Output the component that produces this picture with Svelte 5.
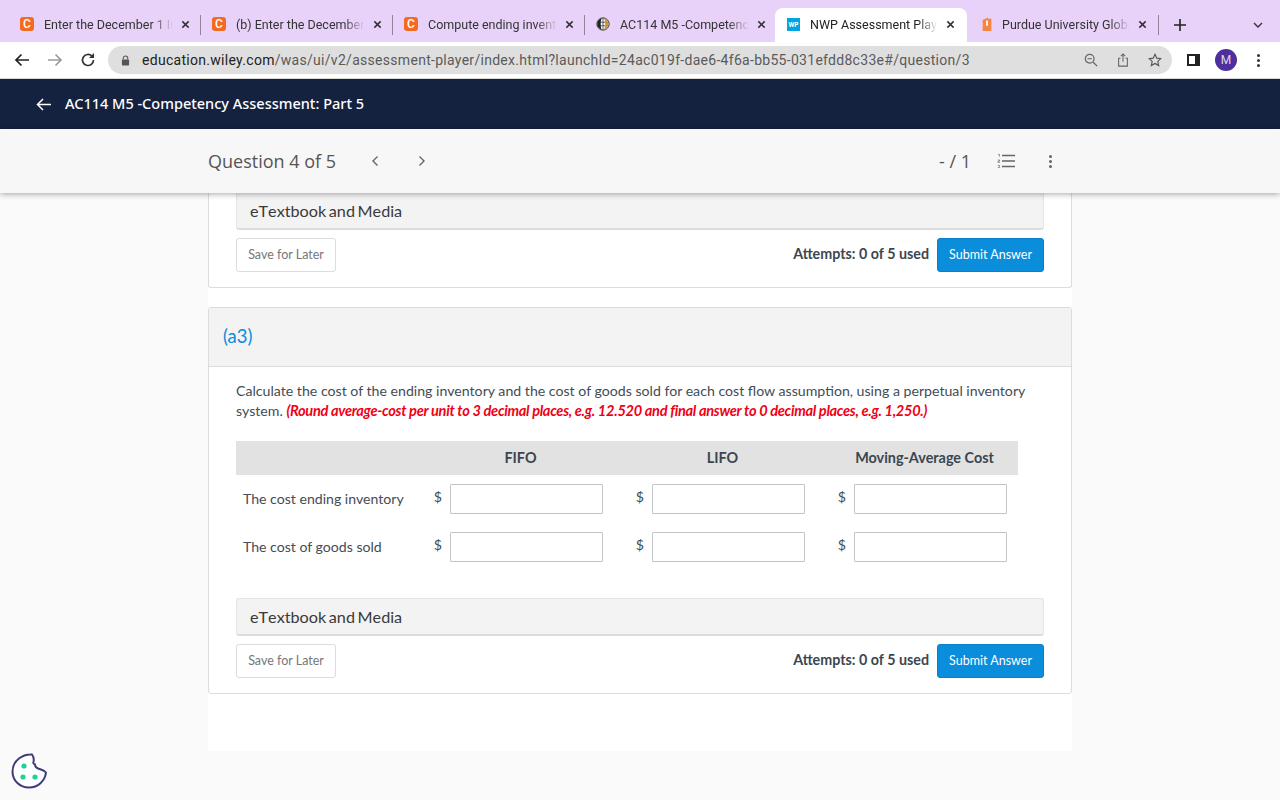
<script>
	const tabs = [
		{ title: 'Enter the December 1 Invent', icon: 'c' },
		{ title: '(b) Enter the December 1 In', icon: 'c' },
		{ title: 'Compute ending inventory', icon: 'c' },
		{ title: 'AC114 M5 -Competency', icon: 'globe', nosep: true },
		{ title: 'NWP Assessment Player', icon: 'wp', active: true },
		{ title: 'Purdue University Global', icon: 'purdue' }
	];
	const columns = ['FIFO', 'LIFO', 'Moving-Average Cost'];
	const rows = ['The cost ending inventory', 'The cost of goods sold'];
</script>

<div class="browser">
	<div class="tabstrip">
		{#each tabs as tab}
			<div class="tab" class:active={tab.active} class:nosep={tab.active || tab.nosep}>
				{#if tab.icon === 'c'}
					<span class="fav fav-c">C</span>
				{:else if tab.icon === 'globe'}
					<svg class="fav" viewBox="0 0 16 16">
						<circle cx="8" cy="8" r="7" fill="#fff" stroke="#222" stroke-width="1" />
						<path d="M8 1v14M1.500 6h13M1.500 10h13" stroke="#222" stroke-width=".8" fill="none" />
						<path d="M9 1.500c3 1 5.500 3.500 5.500 6.500s-2.500 5.500-5.500 6.500c2-3 2-10 0-13z" fill="#c8963c" />
						<path d="M6.500 1.500C3 3 1.500 5 1.500 8s1.500 5 5 6.500c-1.500-3-1.500-10 0-13z" fill="#222" />
					</svg>
				{:else if tab.icon === 'wp'}
					<span class="fav fav-wp">WP</span>
				{:else}
					<svg class="fav" viewBox="0 0 16 16">
						<path d="M3 3.500l6-3V2h4v14H3z" fill="#f58540" />
						<rect x="7" y="4" width="2" height="6" fill="#fff" />
					</svg>
				{/if}
				<span class="title">{tab.title}</span>
				<svg class="close" viewBox="0 0 10 10">
					<path d="M1.500 1.500l7 7M8.500 1.500l-7 7" stroke="#333" stroke-width="1.700" fill="none" />
				</svg>
			</div>
		{/each}
		<svg class="plus" viewBox="0 0 12 12">
			<path d="M6 0v12M0 6h12" stroke="#222" stroke-width="1.600" fill="none" />
		</svg>
		<svg class="chevron" viewBox="0 0 10 6">
			<path d="M1 1l4 4 4-4" stroke="#333" stroke-width="1.400" fill="none" />
		</svg>
	</div>

	<div class="toolbar">
		<svg class="tool" viewBox="0 0 16 16">
			<path d="M15 8H2M7.500 2.500L2 8l5.500 5.500" stroke="#222" stroke-width="1.700" fill="none" />
		</svg>
		<svg class="tool" viewBox="0 0 16 16">
			<path d="M1 8h13M8.500 2.500L14 8l-5.500 5.500" stroke="#9a9a9a" stroke-width="1.700" fill="none" />
		</svg>
		<svg class="tool" viewBox="0 0 16 16">
			<path d="M13.500 8a5.500 5.500 0 1 1-1.600-3.900" stroke="#333" stroke-width="1.700" fill="none" />
			<path d="M14 1v5H9z" fill="#333" />
		</svg>
		<div class="omnibox">
			<svg class="lock" viewBox="0 0 10 12">
				<path d="M2.500 5V3.500a2.500 2.500 0 0 1 5 0V5" stroke="#555" stroke-width="1.200" fill="none" />
				<rect x="1" y="5" width="8" height="6.500" rx="1" fill="#555" />
			</svg>
			<span class="url"><b>education.wiley.com</b>/was/ui/v2/assessment-player/index.html?launchId=24ac019f-dae6-4f6a-bb55-031efdd8c33e#/question/3</span>
			<svg class="omni-icon" viewBox="0 0 16 16">
				<circle cx="6.500" cy="6.500" r="5" stroke="#666" stroke-width="1.400" fill="none" />
				<path d="M10.500 10.500L15 15" stroke="#666" stroke-width="1.500" />
				<path d="M4 6.500h5" stroke="#666" stroke-width="1.200" />
			</svg>
			<svg class="omni-icon" viewBox="0 0 16 16">
				<path d="M5 6H3v9h10V6h-2" stroke="#666" stroke-width="1.200" fill="none" />
				<path d="M8 10V1M5.500 3.500L8 1l2.500 2.500" stroke="#666" stroke-width="1.200" fill="none" />
			</svg>
			<svg class="omni-icon" viewBox="0 0 16 16">
				<path d="M8 1.500l2 4.400 4.700.5-3.500 3.200 1 4.700L8 11.900l-4.200 2.400 1-4.700L1.300 6.400 6 5.900z" stroke="#555" stroke-width="1.300" fill="none" />
			</svg>
		</div>
		<span class="sidepanel"></span>
		<span class="avatar">M</span>
		<span class="kebab"><i></i><i></i><i></i></span>
	</div>
</div>

<header class="nav">
	<svg class="nav-back" viewBox="0 0 16 14">
		<path d="M16 7H1.500M7.500 1L1.500 7l6 6" stroke="#fff" stroke-width="1.600" fill="none" />
	</svg>
	<span>AC114 M5 -Competency Assessment: Part 5</span>
</header>

<div class="question-bar">
	<div class="question-inner">
		<span class="q-title">Question 4 of 5</span>
		<svg class="pager" viewBox="0 0 8 12"><path d="M6.500 1.500L2 6l4.500 4.500" stroke="#666" stroke-width="1.400" fill="none" /></svg>
		<svg class="pager" viewBox="0 0 8 12"><path d="M1.500 1.500L6 6l-4.500 4.500" stroke="#666" stroke-width="1.400" fill="none" /></svg>
		<span class="score">- / 1</span>
		<svg class="list-icon" viewBox="0 0 18 14">
			<path d="M5 1.500h13M5 7h13M5 12.500h13" stroke="#666" stroke-width="1.300" fill="none" />
			<path d="M1 .5h1.500v2M.8 6h1.800v1.200H1v1.200h1.800M.8 11.500h1.800v2H.8" stroke="#666" stroke-width=".7" fill="none" />
		</svg>
		<span class="more"><i></i><i></i><i></i></span>
	</div>
</div>

<main class="page">
	<div class="column">
		<section class="card first">
			<div class="media">eTextbook and Media</div>
			<div class="actions">
				<button class="save">Save for Later</button>
				<span class="attempts">Attempts: 0 of 5 used</span>
				<button class="submit">Submit Answer</button>
			</div>
		</section>

		<section class="card second">
			<h2 class="part">(a3)</h2>
			<div class="body">
				<p class="prompt">
					Calculate the cost of the ending inventory and the cost of goods sold for each cost flow assumption, using a perpetual inventory system.
					<em>(Round average-cost per unit to 3 decimal places, e.g. 12.520 and final answer to 0 decimal places, e.g. 1,250.)</em>
				</p>
				<div class="table">
					<div class="thead">
						{#each columns as col}
							<span>{col}</span>
						{/each}
					</div>
					{#each rows as row}
						<div class="row">
							<span class="label">{row}</span>
							{#each columns as col}
								<div class="cell">
									<span class="dollar">$</span>
									<input type="text" aria-label="{row} {col}" />
								</div>
							{/each}
						</div>
					{/each}
				</div>
				<div class="media">eTextbook and Media</div>
				<div class="actions">
					<button class="save">Save for Later</button>
					<span class="attempts">Attempts: 0 of 5 used</span>
					<button class="submit">Submit Answer</button>
				</div>
			</div>
		</section>
	</div>
</main>

<button class="cookie" aria-label="Cookie settings">
	<svg viewBox="0 0 36 36" width="36" height="36">
		<path d="M21.500 1.500C12 .5 1.500 7.500 1.500 18.500c0 9.500 7.500 16 16.500 16 9 0 16-6.500 17-15-2-2.500-5-3-8-4-2-.8-3-2-3-4-1.500-.5-2-1.500-1.500-3 .5-2 0-5-1.500-7z" fill="#fff" stroke="#3f3a7c" stroke-width="2" />
		<circle cx="13" cy="13" r="2.600" fill="#1fd09a" />
		<circle cx="12" cy="24" r="2.600" fill="#1fd09a" />
		<circle cx="24" cy="24" r="2.600" fill="#1fd09a" />
	</svg>
</button>

<style>
	:global(body) {
		margin: 0;
		background: #fafafa;
		font-family: Lato, sans-serif;
		color: #3c4650;
		height: 800px;
		overflow: hidden;
	}

	/* browser chrome */
	.browser {
		font-family: Roboto, sans-serif;
	}

	.tabstrip {
		height: 42px;
		box-sizing: border-box;
		padding: 8px 0 0 8px;
		background: #e9d2fa;
		display: flex;
		align-items: stretch;
	}

	.tab {
		width: 192px;
		box-sizing: border-box;
		padding: 0 9px 2px 12px;
		display: flex;
		align-items: center;
		position: relative;
		font-size: 12.500px;
		color: #333;
	}

	.tab::after {
		content: '';
		position: absolute;
		right: -1px;
		top: 7px;
		height: 20px;
		width: 1px;
		background: #8f8494;
	}

	.tab.nosep::after {
		display: none;
	}

	.tab:nth-child(6)::after {
		right: 1px;
	}

	.tab.active {
		background: #fff;
		border-radius: 8px 8px 0 0;
		color: #222;
		margin-left: -1px;
		margin-right: 1px;
	}

	.fav {
		width: 14px;
		height: 14px;
		flex: none;
		margin-right: 10px;
	}

	.fav-c {
		background: #f26b21;
		color: #fff;
		border-radius: 3px;
		font-size: 12px;
		font-weight: 500;
		line-height: 14px;
		text-align: center;
	}

	.fav-wp {
		background: #00a4e4;
		color: #fff;
		font-size: 6.500px;
		font-weight: 700;
		line-height: 14px;
		text-align: center;
		width: 13px;
		height: 13px;
	}

	.title {
		flex: 1;
		white-space: nowrap;
		overflow: hidden;
		-webkit-mask-image: linear-gradient(to right, #000 84%, transparent 100%);
		mask-image: linear-gradient(to right, #000 84%, transparent 100%);
	}

	.tab:nth-child(6) .title {
		margin-left: -2px;
	}

	.close {
		width: 9px;
		height: 9px;
		flex: none;
		margin: 0 1px 0 8px;
	}

	.active .close {
		margin-right: 3px;
	}

	.tab:nth-child(6) .close {
		margin-right: 4px;
	}

	.plus {
		width: 12px;
		height: 12px;
		align-self: center;
		margin-left: 14px;
	}

	.chevron {
		width: 10px;
		height: 6px;
		align-self: center;
		margin-left: auto;
		margin-right: 17px;
	}

	.toolbar {
		height: 37px;
		box-sizing: border-box;
		background: #fff;
		border-bottom: 1px solid #d8d8d8;
		display: flex;
		align-items: center;
		padding-left: 14px;
	}

	.tool {
		width: 16px;
		height: 16px;
		margin-right: 17px;
		flex: none;
	}

	.tool:nth-child(3) {
		margin-right: 12px;
	}

	.omnibox {
		width: 1064px;
		height: 28px;
		box-sizing: border-box;
		background: #dfdfdf;
		border-radius: 14px;
		display: flex;
		align-items: center;
		padding: 0 10px 0 13px;
		flex: none;
	}

	.lock {
		width: 9px;
		height: 11px;
		flex: none;
		margin-right: 12px;
	}

	.url {
		flex: 1;
		font-size: 14px;
		letter-spacing: 0.29px;
		color: #5a5a5a;
		white-space: nowrap;
	}

	.url b {
		font-weight: 400;
		color: #222;
	}

	.omni-icon {
		width: 14px;
		height: 14px;
		margin-left: 18px;
		flex: none;
	}

	.sidepanel {
		width: 6px;
		height: 8px;
		border: 2px solid #222;
		border-right-width: 5px;
		margin-left: 15px;
		flex: none;
	}

	.avatar {
		width: 22px;
		height: 22px;
		border-radius: 50%;
		background: #4f2f9e;
		color: #ddd;
		font-size: 12px;
		line-height: 22px;
		text-align: center;
		margin-left: 15px;
		flex: none;
	}

	.kebab,
	.more {
		display: flex;
		flex-direction: column;
		gap: 2px;
		margin-left: 20px;
	}

	.kebab i,
	.more i {
		width: 3px;
		height: 3px;
		border-radius: 50%;
		background: #333;
	}

	/* app header */
	.nav {
		height: 50px;
		background: #14213f;
		color: #fff;
		display: flex;
		align-items: center;
		padding-left: 36px;
		font-family: 'Noto Sans', sans-serif;
		font-size: 14.500px;
		font-weight: 500;
	}

	.nav span {
		padding-bottom: 3px;
	}

	.nav-back {
		width: 15px;
		height: 13px;
		margin-right: 14px;
	}

	.question-bar {
		height: 64px;
		background: #f7f7f7;
		box-shadow: 0 1px 6px rgba(0, 0, 0, 0.35);
		position: relative;
		z-index: 2;
	}

	.question-inner {
		width: 864px;
		margin: 0 auto;
		height: 100%;
		display: flex;
		align-items: center;
	}

	.q-title {
		font-family: 'Open Sans', sans-serif;
		font-size: 18px;
		color: #555;
		margin-right: 35px;
		padding-bottom: 1px;
	}

	.pager {
		width: 8px;
		height: 12px;
		margin-right: 39px;
	}

	.score {
		margin-left: auto;
		font-family: 'Open Sans', sans-serif;
		font-size: 18px;
		color: #555;
		margin-right: 26px;
	}

	.list-icon {
		width: 18px;
		height: 14px;
	}

	.more {
		margin: 0 20px 0 34px;
	}

	.more i {
		background: #666;
	}

	/* page */
	.page {
		display: flex;
		justify-content: center;
	}

	.column {
		width: 864px;
		height: 558px;
		background: #fff;
		box-sizing: border-box;
	}

	.card {
		box-sizing: border-box;
		border: 1px solid #dcdcdc;
		border-radius: 3px;
		background: #fff;
	}

	.first {
		border-top: none;
		border-radius: 0 0 3px 3px;
		padding: 0 27px;
		height: 95px;
		margin-bottom: 19px;
	}

	.media {
		height: 38px;
		box-sizing: border-box;
		background: #f3f3f3;
		border: 1px solid #e3e3e3;
		border-bottom: 2px solid #dcdcdc;
		border-radius: 3px;
		padding-left: 13px;
		font-size: 16.200px;
		font-kerning: none;
		word-spacing: -1.500px;
		line-height: 36px;
		color: #3a3a3a;
	}

	.first .media {
		height: 37px;
		border-top: none;
		border-radius: 0 0 3px 3px;
	}

	.actions {
		display: flex;
		align-items: center;
		margin-top: 8px;
	}

	.save,
	.submit {
		font-family: Lato, sans-serif;
		font-size: 12.500px;
		height: 34px;
		border-radius: 3px;
		padding: 0 0 1px;
		box-sizing: border-box;
	}

	.save {
		width: 100px;
		background: #fff;
		border: 1px solid #dcdcdc;
		color: #777;
	}

	.attempts {
		margin-left: auto;
		margin-right: 8px;
		font-size: 14.300px;
		font-weight: 700;
		color: #3c4650;
		padding-bottom: 4px;
	}

	.submit {
		width: 107px;
		background: #0a8ddb;
		border: 1px solid #0a80c8;
		color: #fff;
	}

	.second {
		height: 387px;
	}

	.part {
		margin: 0;
		height: 59px;
		box-sizing: border-box;
		background: #f3f3f3;
		border-bottom: 1px solid #dcdcdc;
		padding-left: 14px;
		font-size: 18.500px;
		font-weight: 400;
		line-height: 56px;
		color: #0a8ddb;
	}

	.body {
		padding: 14px 27px 0;
	}

	.prompt {
		margin: 0 0 20px;
		font-size: 14.150px;
		line-height: 20px;
		color: #444c54;
	}

	.prompt em {
		font-weight: 700;
		color: #f00016;
		font-size: 14.600px;
		letter-spacing: -0.3px;
	}

	.table {
		width: 782px;
		margin-bottom: 27px;
	}

	.thead {
		height: 34px;
		background: #e2e2e2;
		display: grid;
		grid-template-columns: 183.500px repeat(3, 202px);
		align-items: center;
		font-size: 14.400px;
		font-weight: 700;
		color: #3c4650;
	}

	.thead span {
		text-align: center;
		padding-bottom: 2px;
	}

	.thead span:first-child {
		grid-column: 2;
	}

	.row {
		display: grid;
		grid-template-columns: 165px repeat(3, 202px);
		height: 48px;
		align-items: center;
	}

	.label {
		padding: 0 0 2px 7px;
		font-size: 14.100px;
		color: #444c54;
		white-space: nowrap;
	}

	.cell {
		display: flex;
		align-items: center;
		justify-content: flex-end;
		gap: 8px;
	}

	.dollar {
		font-size: 14.200px;
		color: #444c54;
		position: relative;
		top: -3px;
	}

	input {
		width: 153px;
		height: 30px;
		box-sizing: border-box;
		background: #fff;
		border: 1px solid #c4c4c4;
		border-radius: 1px;
		outline: none;
	}

	.cookie {
		position: absolute;
		left: 11px;
		top: 753px;
		width: 36px;
		height: 36px;
		padding: 0;
		background: none;
		border: none;
	}
</style>
